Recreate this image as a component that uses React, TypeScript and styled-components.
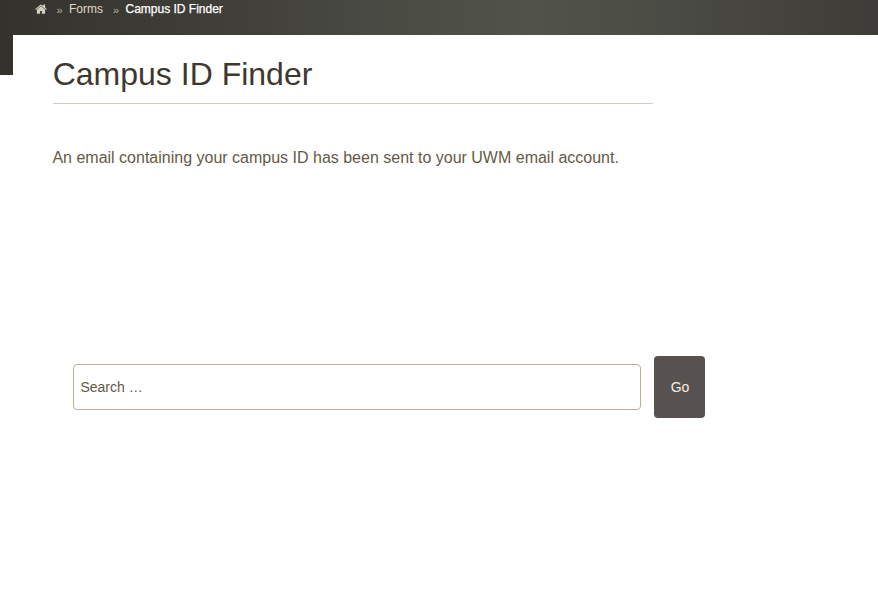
import React from "react";
import styled, { createGlobalStyle } from "styled-components";

const GlobalStyle = createGlobalStyle`
  *, *::before, *::after { box-sizing: border-box; }
  html, body, #root { margin: 0; height: 100%; }
  body {
    font-family: "Liberation Sans", Arial, sans-serif;
    background: #fff;
    overflow: hidden;
  }
`;

const Page = styled.div`
  height: 592px;
  overflow: hidden;
`;

const Backdrop = styled.div`
  height: 75px;
  padding-left: 13px;
  background: linear-gradient(
    90deg,
    #33322d 0,
    #3b3934 120px,
    #43413c 270px,
    #4a4c44 390px,
    #51524a 530px,
    #4c4e46 640px,
    #46453f 750px,
    #3e3c38 878px
  );
`;

const Breadcrumbs = styled.nav`
  display: flex;
  height: 35px;
  padding: 2px 0 0 22px;
  font-size: 12px;
  line-height: 14px;
  color: #e5dfcf;
`;

const HomeLink = styled.a`
  display: flex;
  width: 21.5px;
  color: #d5cfc0;
`;

const HomeGlyph = styled.svg`
  width: 12px;
  height: 14px;
  fill: currentColor;
`;

const Separator = styled.span<{ $width: number }>`
  width: ${(p) => p.$width}px;
  padding-top: 1px;
  font-size: 11px;
  color: #b5af9f;
`;

const Crumb = styled.a<{ $width?: number; $current?: boolean }>`
  width: ${(p) => (p.$width ? `${p.$width}px` : "auto")};
  color: ${(p) => (p.$current ? "#fff" : "#e0d9c7")};
  -webkit-text-stroke: ${(p) => (p.$current ? "0.25px" : "0")} currentColor;
  white-space: nowrap;
`;

const Content = styled.main`
  height: 557px;
  padding: 21px 0 0 40px;
  background: #fff;
`;

const Title = styled.h1`
  width: 600px;
  height: 48px;
  margin: 0;
  border-bottom: 1px solid #d0cec1;
  font-size: 32px;
  font-weight: 400;
  line-height: 36px;
  text-indent: -0.3px;
  color: #3e382e;
`;

const Message = styled.p`
  margin: 44px 0 0;
  font-size: 16px;
  line-height: 20px;
  text-indent: -0.6px;
  color: #645a45;
  white-space: nowrap;
`;

const SearchForm = styled.form`
  display: flex;
  align-items: center;
  gap: 13px;
  margin: 188px 0 0 20px;
`;

const SearchInput = styled.input`
  width: 568px;
  height: 46px;
  padding: 0 6.4px;
  border: 1px solid #b9b09a;
  border-radius: 4px;
  outline: none;
  background: #fff;
  font: 14px "Liberation Sans", Arial, sans-serif;
  &::placeholder {
    color: #625944;
    opacity: 1;
  }
`;

const GoButton = styled.button`
  width: 51px;
  height: 62px;
  padding: 0 0 0 1px;
  border: 0;
  border-radius: 4px;
  background: #575250;
  color: #f5eee0;
  font: 14px "Liberation Sans", Arial, sans-serif;
`;

function HomeIcon() {
  return (
    <HomeGlyph viewBox="60 120 1672 1536" preserveAspectRatio="xMidYMid meet" aria-hidden="true">
      <path d="M1472 992v480q0 26-19 45t-45 19h-384v-384h-256v384h-384q-26 0-45-19t-19-45v-480q0-1 .5-3t.5-3l575-474 575 474q1 2 1 6zm223-69l-62 74q-8 9-21 11h-3q-13 0-21-7l-692-577-692 577q-12 8-24 7-13-2-21-11l-62-74q-8-10-7-23.500t11-21.500l719-599q32-26 76-26t76 26l244 204v-195q0-14 9-23t23-9h192q14 0 23 9t9 23v408l219 182q10 8 11 21.500t-7 23.500z" />
    </HomeGlyph>
  );
}

export default function App() {
  return (
    <Page>
      <GlobalStyle />
      <Backdrop>
        <Breadcrumbs aria-label="Breadcrumb">
          <HomeLink aria-label="Home">
            <HomeIcon />
          </HomeLink>
          <Separator $width={12.5}>»</Separator>
          <Crumb $width={44}>Forms</Crumb>
          <Separator $width={12.5}>»</Separator>
          <Crumb $current>Campus ID Finder</Crumb>
        </Breadcrumbs>
        <Content>
          <Title>Campus ID Finder</Title>
          <Message>
            An email containing your campus ID has been sent to your UWM email account.
          </Message>
          <SearchForm onSubmit={(e) => e.preventDefault()}>
            <SearchInput type="text" placeholder="Search …" aria-label="Search" />
            <GoButton type="submit">Go</GoButton>
          </SearchForm>
        </Content>
      </Backdrop>
    </Page>
  );
}
